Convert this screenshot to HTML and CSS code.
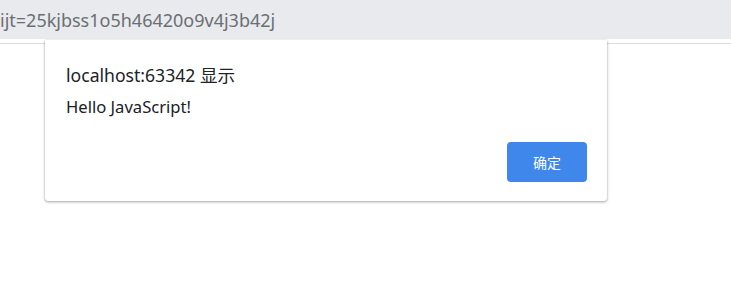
FILE: index.html
```html
<!DOCTYPE html>
<html lang="zh-CN">
<head>
<meta charset="utf-8">
<link rel="stylesheet" href="styles.css">
</head>
<body>
<div class="addressbar"><span class="url">ijt=25kjbss1o5h46420o9v4j3b42j</span></div>
<div class="divider"></div>
<div class="dialog">
  <div class="title">localhost:63342 显示</div>
  <div class="message">Hello JavaScript!</div>
  <div class="actions"><button class="ok">确定</button></div>
</div>
</body>
</html>
```

FILE: styles.css
```css
html, body {
  margin: 0;
  padding: 0;
  background: #ffffff;
  width: 731px;
  height: 293px;
  overflow: hidden;
  font-family: "Noto Sans", "Noto Sans CJK SC", sans-serif;
}
.addressbar {
  height: 39px;
  background: #e8eaed;
  display: flex;
  align-items: center;
  overflow: hidden;
}
.url {
  font-size: 18px;
  color: #6b6f74;
  margin-left: 0;
  white-space: nowrap;
}
.divider {
  margin-top: 4px;
  height: 1px;
  background: #dcdcdc;
}
.dialog {
  position: absolute;
  left: 45px;
  top: 40px;
  width: 562px;
  height: 161px;
  box-sizing: border-box;
  background: #fff;
  border-radius: 0 0 3px 3px;
  box-shadow: 0 1px 3px rgba(0,0,0,0.35), 0 0 1px rgba(0,0,0,0.25);
  padding: 23px 20px 0 21px;
  display: flex;
  flex-direction: column;
}
.title {
  font-size: 17.6px;
  color: #202124;
  line-height: 24px;
}
.message {
  margin-top: 10px;
  font-size: 16.6px;
  color: #202124;
  line-height: 20px;
}
.actions {
  display: flex;
  justify-content: flex-end;
  margin-top: 25px;
}
.ok {
  width: 80px;
  height: 40px;
  border: none;
  border-radius: 4px;
  background: #3f87ea;
  color: #fff;
  font-family: "Noto Sans CJK SC", sans-serif;
  font-size: 14px;
  padding: 0;
}
```
